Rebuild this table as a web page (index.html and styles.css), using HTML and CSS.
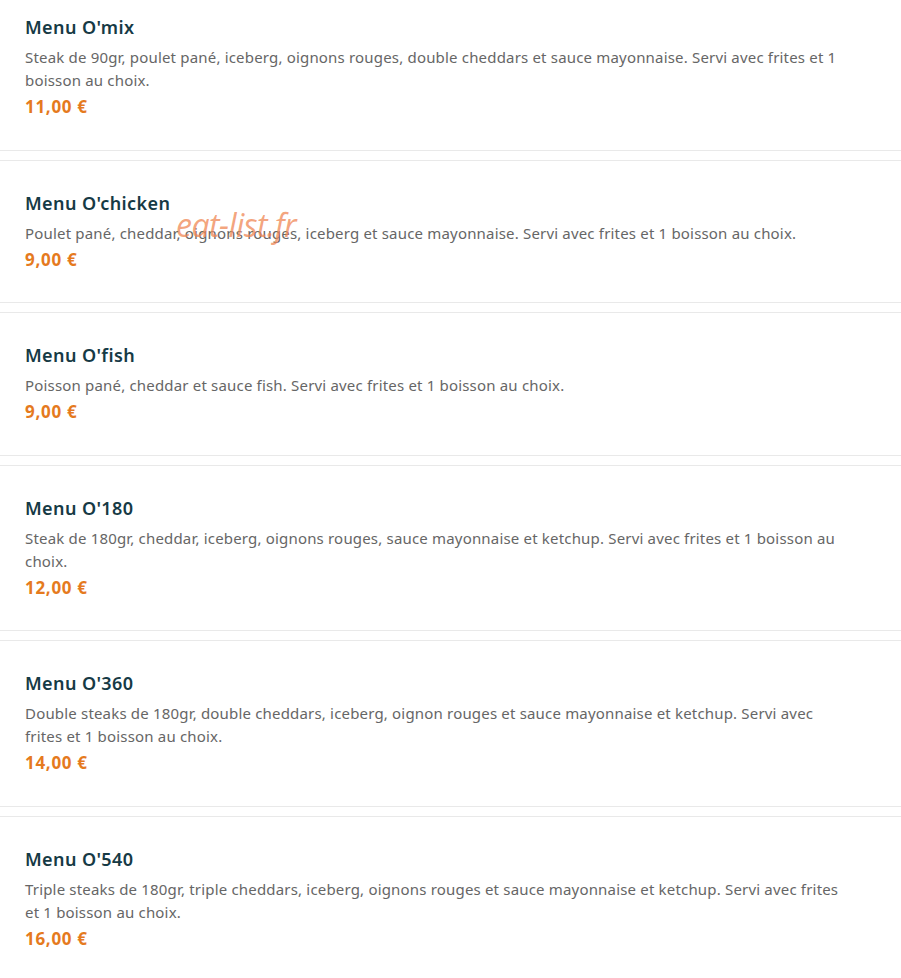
FILE: index.html
```html
<!DOCTYPE html>
<html lang="fr">
<head>
<meta charset="utf-8">
<title>Menus</title>
<link rel="stylesheet" href="styles.css">
</head>
<body>
<div class="list">
  <div class="card first">
    <h3 class="title">Menu O'mix</h3>
    <p class="desc">Steak de 90gr, poulet pané, iceberg, oignons rouges, double cheddars et sauce mayonnaise. Servi avec frites et 1 boisson au choix.</p>
    <p class="price">11,00 €</p>
  </div>
  <div class="card">
    <h3 class="title">Menu O'chicken</h3>
    <p class="desc">Poulet pané, cheddar, oignons rouges, iceberg et sauce mayonnaise. Servi avec frites et 1 boisson au choix.</p>
    <p class="price">9,00 €</p>
    <span class="watermark">eat-list.fr</span>
  </div>
  <div class="card">
    <h3 class="title">Menu O'fish</h3>
    <p class="desc">Poisson pané, cheddar et sauce fish. Servi avec frites et 1 boisson au choix.</p>
    <p class="price">9,00 €</p>
  </div>
  <div class="card">
    <h3 class="title">Menu O'180</h3>
    <p class="desc">Steak de 180gr, cheddar, iceberg, oignons rouges, sauce mayonnaise et ketchup. Servi avec frites et 1 boisson au choix.</p>
    <p class="price">12,00 €</p>
  </div>
  <div class="card">
    <h3 class="title">Menu O'360</h3>
    <p class="desc">Double steaks de 180gr, double cheddars, iceberg, oignon rouges et sauce mayonnaise et ketchup. Servi avec frites et 1 boisson au choix.</p>
    <p class="price">14,00 €</p>
  </div>
  <div class="card">
    <h3 class="title">Menu O'540</h3>
    <p class="desc">Triple steaks de 180gr, triple cheddars, iceberg, oignons rouges et sauce mayonnaise et ketchup. Servi avec frites et 1 boisson au choix.</p>
    <p class="price">16,00 €</p>
  </div>
</div>
</body>
</html>
```
FILE: styles.css
```css
html, body {
  margin: 0;
  padding: 0;
  background: #ffffff;
}
body {
  font-family: "Noto Sans", "DejaVu Sans", sans-serif;
  overflow: hidden;
}
.list {
  display: flex;
  flex-direction: column;
  gap: 9px;
}
.card {
  position: relative;
  border-top: 1px solid #e9e9e9;
  border-bottom: 1px solid #e9e9e9;
  padding: 30px 50px 30.6px 25px;
  display: flex;
  flex-direction: column;
}
.card.first {
  border-top: none;
  padding-top: 15px;
}
.title {
  margin: 0;
  font-size: 18px;
  line-height: 24px;
  font-weight: 600;
  letter-spacing: 0.4px;
  color: #163a45;
}
.desc {
  margin: 7px 0 0;
  font-size: 15px;
  line-height: 23px;
  letter-spacing: 0.18px;
  color: #666666;
}
.price {
  margin: 3px 0 0;
  font-size: 17px;
  line-height: 24px;
  font-weight: 700;
  letter-spacing: 0.7px;
  color: #e57a1e;
}
.watermark {
  position: absolute;
  left: 176px;
  top: 42px;
  font-family: "Open Sans", sans-serif;
  font-style: italic;
  font-size: 32px;
  letter-spacing: -0.5px;
  color: rgba(240, 135, 85, 0.75);
  pointer-events: none;
}
```
